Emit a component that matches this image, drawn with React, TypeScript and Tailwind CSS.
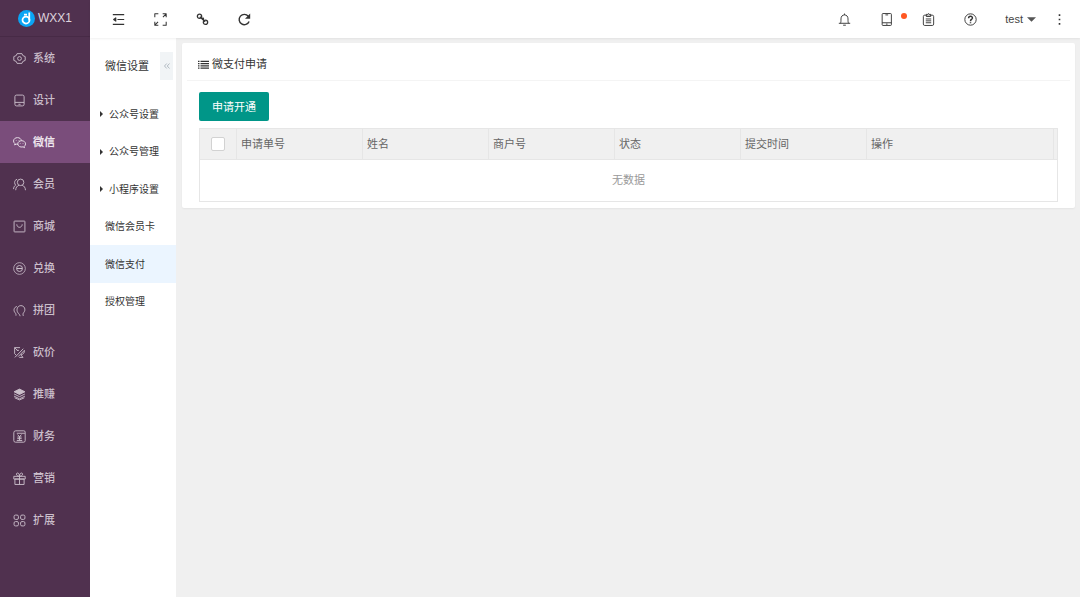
import type { ReactNode } from "react";

const navItems = [
  { t: "系统", i: "gear" },
  { t: "设计", i: "design" },
  { t: "微信", i: "wechat", on: true },
  { t: "会员", i: "member" },
  { t: "商城", i: "shop" },
  { t: "兑换", i: "exchange" },
  { t: "拼团", i: "group" },
  { t: "砍价", i: "bargain" },
  { t: "推赚", i: "layers" },
  { t: "财务", i: "finance" },
  { t: "营销", i: "gift" },
  { t: "扩展", i: "grid" },
];

const subItems = [
  { t: "公众号设置", sub: true },
  { t: "公众号管理", sub: true },
  { t: "小程序设置", sub: true },
  { t: "微信会员卡" },
  { t: "微信支付", on: true },
  { t: "授权管理" },
];

const columns = ["申请单号", "姓名", "商户号", "状态", "提交时间"];

const shapes: Record<string, ReactNode> = {
  gear: <><path d="M7.500 3h9l1.500 3.500 4.500 2v7L18 17.500 16.500 21h-9L6 17.500l-4.500-2v-7L6 6.500z" /><circle cx="12" cy="12" r="3.500" /></>,
  design: <><rect x="3.500" y="2" width="17" height="20" rx="3" /><path d="M3.500 15.500h17M10 19h4" /></>,
  wechat: <><path d="M15.500 8.500C15 5.200 12 3 8.300 3 4.200 3 1 5.700 1 9.200c0 2 1 3.700 2.700 4.800L3 16.500l3-1.500c1 .3 2 .4 3.200.4" /><path d="M16 8.700c4 0 7.200 2.600 7.200 5.900 0 1.900-1 3.500-2.500 4.500l.6 2.400-2.800-1.400c-5 1.300-9.700-1.500-9.700-5.500 0-3.300 3.200-5.900 7.200-5.900z" /><path d="M6 7.500v1M11 7.500v1M13.500 13v1M18.500 13v1" /></>,
  member: <><circle cx="14" cy="8" r="6" /><path d="M5 22.500c0-4.500 2.500-8 6-9M17 13.500c3.500 1 6 4.500 6 9M7.500 2.500C4.500 3 3 5.500 3 8.500c0 2 .8 3.700 2 4.700C2.500 14.500 1 17.500 1 20.500" /></>,
  shop: <><rect x="2" y="2" width="20" height="20" rx="1" /><path d="M7 8c0 3 2.200 5.500 5 5.500S17 11 17 8" /></>,
  exchange: <><circle cx="12" cy="12" r="10.800" strokeWidth="1.400" /><circle cx="12" cy="12" r="5.500" /><path strokeWidth="2" d="M7 12h10" /></>,
  group: <><path d="M13 22.500c0-2.500-2.500-4.500-4-6.500C5.500 11 8 3 14.500 3c7 0 9.500 8 5.500 12.500-1.500 1.500-2 3.500-1 6.500" /><path d="M7 4.500C2.500 6 .5 10.500 3 15c1.500 1.500 3 3.500 2.500 6.500" /></>,
  bargain: <><path d="M13 3H3v11l3 3M3.500 21 19 5M3 3l6 6M9.500 19.500 21 8c1 3-1 7-6.500 8.500l4 4.500h-7" /><path d="M7 8h4" /></>,
  layers: <><path fill="currentColor" d="m12 2 10 5-10 5L2 7z" /><path d="m2 11 10 5 10-5M2 15l10 5 10-5M3 18l9 4 9-4" /></>,
  finance: <><path d="M5 1.500h15a2.500 2.500 0 0 1 2.500 2.500v15.500a3 3 0 0 1-3 3h-15a3 3 0 0 1-3-3V5A3.500 3.500 0 0 1 5 1.500zM7 6h15" /><path strokeWidth="1.800" d="m8.500 8.500 3.500 4 3.500-4M12 12.500V19M8 13h8M8 16h8M7 19.500h10" /></>,
  gift: <><path d="M1.500 8h21v5h-21zM3.500 13h17v10h-17zM12 8v15M12 8C5 8 5 1 9 2c2 .5 3 3 3 6zM12 8c7 0 7-7 3-6-2 .5-3 3-3 6z" /></>,
  grid: <><rect x="2" y="2" width="8" height="8" rx="2.500" /><rect x="14" y="2" width="8" height="8" rx="2.500" /><rect x="2" y="14" width="8" height="8" rx="2.500" /><rect x="14" y="14" width="8" height="8" rx="2.500" /></>,
  indent: <path strokeWidth="2" d="M1.500 3h21M10 12h12.500M1.500 21h21M7 9 3 12l4 3zM3 12h5" />,
  expand: <path strokeWidth="1.900" d="M1.500 8V1.500H8M16 1.500h6.500V8M22 2l-5.500 5.500M22.500 16v6.500H16M8 22.500H1.500V16M2 22l5.500-5.500" />,
  link: <><circle cx="6.500" cy="6" r="4" strokeWidth="2.400" /><circle cx="17.500" cy="17" r="4" strokeWidth="2.400" /><path strokeWidth="2.400" d="m7 7 10 9M12 8.500c2 1 2.500 3 1 5" /></>,
  refresh: <><path strokeWidth="2.600" d="M20.500 15.500A9.500 9.500 0 1 1 19 6" /><path fill="currentColor" stroke="none" d="M22.500 1v9.500H13z" /></>,
  bell: <path d="M1.500 19h21M4.500 19c1-2 1-4 1-8C5.500 6.500 8 3.500 12 3.500s6.500 3 6.500 7.500c0 4 0 6 1 8M12 1v2.500M9.500 22.500h5" />,
  phone: <><rect x="4" y="1" width="17" height="22" rx="1.500" /><path d="M4 18h17M10 3.500h5M11 20.500h3" /></>,
  clipboard: <><rect x="2.500" y="4" width="19" height="19" rx="2.500" /><path fill="#bbb" d="M8 2.500h2.500L12 1l1.500 1.500H16v4H8z" /><path d="M7 11h10M7 14.500h10M7 18h10" /></>,
  help: <><circle cx="12" cy="12" r="10.500" /><path strokeWidth="2.800" d="M8.500 9.500C8.500 4.500 16 5 15.500 9.500 15 12 12 12 12 15M12 17v2" /></>,
  more: <path strokeWidth="3" strokeLinecap="butt" d="M12 2.500v3M12 10.500v3M12 18.500v3" />,
};

function Icon({ name }: { name: string }) {
  return (
    <svg viewBox="0 0 24 24" fill="none" stroke="currentColor" strokeWidth="1.700" strokeLinejoin="round" className="size-[13px] shrink-0" aria-hidden="true">
      {shapes[name]}
    </svg>
  );
}

function BarButton({ name, label, dot }: { name: string; label: string; dot?: boolean }) {
  return (
    <button type="button" aria-label={label} className="relative flex w-[42px] shrink-0 items-center justify-center pt-px text-[#333]">
      <Icon name={name} />
      {dot && <span className="absolute right-0 top-[13px] size-1.5 rounded-full bg-[#ff5722]" />}
    </button>
  );
}

export default function App() {
  return (
    <div className="flex min-h-screen bg-[#f0f0f0] font-['Liberation_Sans','Noto_Sans_CJK_SC',sans-serif] text-[11px] text-[#333]">
      <aside className="w-[90px] shrink-0 bg-[#50314f]">
        <a href="#" className="flex h-[37px] items-center justify-center gap-[3px] border-b border-[#472a46] text-xs text-[#ddd3dd]">
          <svg viewBox="0 0 34 34" className="size-[17px]" aria-hidden="true">
            <circle cx="17" cy="17" r="17" fill="#0aa5f5" />
            <circle cx="16" cy="20" r="7" fill="none" stroke="#fff" strokeWidth="3.500" />
            <path d="M22.500 5v16M12 9h6" stroke="#fff" strokeWidth="3.500" />
          </svg>
          WXX1
        </a>
        <nav>
          {navItems.map((n) => (
            <a key={n.t} href="#" className={`flex h-[42px] items-center gap-[7px] pl-[13px] pt-px ${n.on ? "bg-[#7a4d7b] font-bold text-[#eee6ee]" : "font-medium text-[#cbbfcb]"}`}>
              <Icon name={n.i} />
              {n.t}
            </a>
          ))}
        </nav>
      </aside>

      <div className="flex min-w-0 flex-1 flex-col">
        <header className="z-10 flex h-[38px] shrink-0 bg-white shadow-[0_1px_2px_rgba(0,0,0,0.06)]">
          <div className="flex flex-1 gap-0 pl-[7px]">
            <BarButton name="indent" label="收起菜单" />
            <BarButton name="expand" label="全屏" />
            <BarButton name="link" label="链接" />
            <BarButton name="refresh" label="刷新" />
          </div>
          <BarButton name="bell" label="通知" />
          <BarButton name="phone" label="手机" dot />
          <BarButton name="clipboard" label="记录" />
          <BarButton name="help" label="帮助" />
          <button type="button" className="flex items-center gap-1 pl-[14px] pr-0.5 text-[#444]">
            test
            <svg viewBox="0 0 10 5" className="h-[5px] w-[9px]" aria-hidden="true"><path d="M0 0h10L5 5z" fill="#555" /></svg>
          </button>
          <BarButton name="more" label="更多" />
        </header>

        <div className="flex flex-1">
          <div className="w-[86px] shrink-0 bg-white">
            <div className="flex items-center justify-between pb-[15px] pl-[15px] pr-[3px] pt-[14px]">
              <h2 className="pt-px">微信设置</h2>
              <button type="button" aria-label="折叠" className="flex h-7 w-[13px] items-center justify-center bg-[#f1f4f6] text-[#a9b3bb]">
                <svg viewBox="0 0 12 12" className="size-1.5" fill="none" stroke="currentColor" strokeWidth="1.800" aria-hidden="true"><path d="M5.500 1 1 6l4.500 5M11 1 6.500 6 11 11" /></svg>
              </button>
            </div>
            <nav className="grid h-[225px] grid-rows-6 text-[10px]">
              {subItems.map((s) => (
                <a key={s.t} href="#" className={`flex items-center pt-px ${s.sub ? "gap-1.5 pl-[10px]" : "pl-[15px]"} ${s.on ? "bg-[#ebf5ff]" : ""}`}>
                  {s.sub && <svg viewBox="0 0 3 6" className="h-1.5 w-[3px]" aria-hidden="true"><path d="M0 0l3 3-3 3z" fill="#333" /></svg>}
                  {s.t}
                </a>
              ))}
            </nav>
          </div>

          <main className="min-w-0 flex-1 py-[5px] pl-1.5 pr-[5px]">
            <section className="rounded-xs bg-white shadow-[0_1px_2px_rgba(0,0,0,0.05)]">
              <div className="px-[5px]">
                <h1 className="flex h-[38px] items-center gap-[3px] border-b border-[#f4f4f4] pl-[11px] pt-[6px]">
                  <svg viewBox="0 0 22 18" className="h-[9px] w-[11px]" aria-hidden="true"><path d="M0 2.500h3M5 2.500h17M0 7h3M5 7h17M0 11.500h3M5 11.500h17M0 16h3M5 16h17" stroke="#333" strokeWidth="2.500" /></svg>
                  微支付申请
                </h1>
              </div>
              <div className="pb-1.5 pl-[17px] pr-[17px] pt-[11px]">
                <button type="button" className="h-[29px] rounded-xs bg-[#009688] px-[13px] pt-px text-white">申请开通</button>
                <table className="mt-[7px] w-full table-fixed border border-[#e6e6e6] text-left text-[#666]">
                  <thead>
                    <tr className="h-[31px] bg-[#f0f0f0]">
                      <th className="w-[37px] border-b border-r border-[#e6e6e6]">
                        <input type="checkbox" aria-label="全选" className="mx-auto block size-[14px] appearance-none rounded-xs border border-[#d2d2d2] bg-white" />
                      </th>
                      {columns.map((c) => (
                        <th key={c} className="w-[126px] border-b border-r border-[#e6e6e6] pl-1 font-normal">{c}</th>
                      ))}
                      <th className="border-b border-r border-[#e6e6e6] pl-1 font-normal">操作</th>
                      <td className="w-1 border-b border-[#e6e6e6]" />
                    </tr>
                  </thead>
                  <tbody>
                    <tr className="h-[42px]">
                      <td colSpan={8} className="text-center text-[#999]">无数据</td>
                    </tr>
                  </tbody>
                </table>
              </div>
            </section>
          </main>
        </div>
      </div>
    </div>
  );
}
